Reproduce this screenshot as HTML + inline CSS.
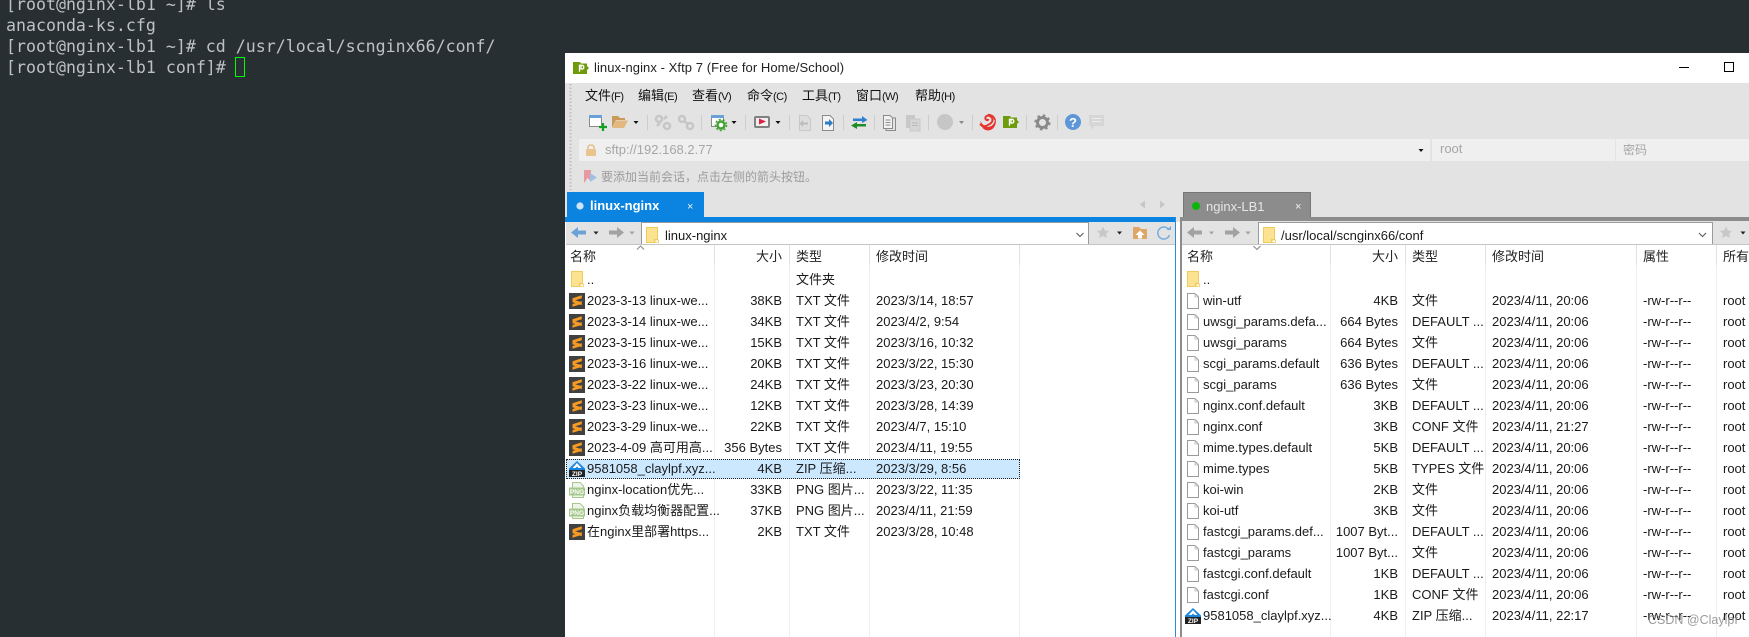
<!DOCTYPE html>
<html><head><meta charset="utf-8"><style>
html,body{margin:0;padding:0;background:#282f33}
#p{position:relative;width:1749px;height:637px;overflow:hidden;background:#282f33;font-family:"Liberation Sans","Noto Sans CJK SC",sans-serif;font-size:13px;color:#1a1a1a}
.a{position:absolute;white-space:nowrap}
.t{position:absolute;left:6px;font-family:"DejaVu Sans Mono",monospace;font-size:16.6px;color:#bcc2c2;line-height:21px;height:21px;white-space:pre}
.r{position:absolute;height:21px;line-height:21px;white-space:nowrap;margin-top:-1px}
.m{top:87px;height:18px;line-height:18px;color:#111}
.m i{font-style:normal;font-size:11px;letter-spacing:-.5px}
.h{top:247px;height:20px;line-height:20px;color:#222}
svg{position:absolute;left:0;top:0}
</style></head><body><div id="p">
<div class="t" style="top:-6px">[root@nginx-lb1 ~]# ls</div>
<div class="t" style="top:15px">anaconda-ks.cfg</div>
<div class="t" style="top:36px">[root@nginx-lb1 ~]# cd /usr/local/scnginx66/conf/</div>
<div class="t" style="top:57px">[root@nginx-lb1 conf]#</div>
<div class="a" style="left:235px;top:57px;width:8px;height:18px;border:1px solid #0f0"></div>

<div class="a" style="left:565px;top:53px;width:1184px;height:584px;background:#fff"></div>
<div class="a" style="left:565px;top:83px;width:1184px;height:139px;background:#e3e3e3"></div>
<div class="a" style="left:579px;top:139px;width:851px;height:22px;background:#efefef"></div>
<div class="a" style="left:1432px;top:139px;width:183px;height:22px;background:#efefef"></div>
<div class="a" style="left:1616px;top:139px;width:133px;height:22px;background:#efefef"></div>
<div class="a" style="left:567px;top:192px;width:137px;height:25px;background:#0a84e0"></div>
<div class="a" style="left:565px;top:217px;width:611px;height:5px;background:#0a84e0"></div>
<div class="a" style="left:1175px;top:217px;width:1px;height:420px;background:#2a8ad8"></div>
<div class="a" style="left:1177px;top:192px;width:572px;height:30px;background:#e3e3e3"></div>
<div class="a" style="left:1182px;top:222px;width:567px;height:22px;background:#e3e3e3"></div>
<div class="a" style="left:1183px;top:192px;width:128px;height:25px;background:#8c8c8c;box-shadow:inset 0 1px 0 #777,inset 1px 0 0 #777,inset -1px 0 0 #777"></div>
<div class="a" style="left:1180px;top:217px;width:569px;height:4px;background:#8c8c8c"></div>
<div class="a" style="left:1180px;top:221px;width:2px;height:416px;background:#8c8c8c"></div>
<div class="a" style="left:566px;top:222px;width:609px;height:22px;background:#e3e3e3"></div>
<div class="a" style="left:1182px;top:244px;width:567px;height:393px;background:#fff"></div>
<div class="a" style="left:641px;top:222px;width:446px;height:21px;background:#fff;border:1px solid #9a9a9a"></div>
<div class="a" style="left:1258px;top:222px;width:453px;height:21px;background:#fff;border:1px solid #9a9a9a"></div>
<div class="a" style="left:566px;top:244px;width:609px;height:1px;background:#c4c4c4"></div>
<div class="a" style="left:1182px;top:244px;width:567px;height:1px;background:#c4c4c4"></div>

<!-- column dividers -->
<div class="a" style="left:714px;top:245px;width:1px;height:392px;background:#e8f1fa"></div>
<div class="a" style="left:789px;top:245px;width:1px;height:392px;background:#e8f1fa"></div>
<div class="a" style="left:869px;top:245px;width:1px;height:392px;background:#e8f1fa"></div>
<div class="a" style="left:1019px;top:245px;width:1px;height:392px;background:#e8f1fa"></div>
<div class="a" style="left:1330px;top:245px;width:1px;height:392px;background:#e8f1fa"></div>
<div class="a" style="left:1405px;top:245px;width:1px;height:392px;background:#e8f1fa"></div>
<div class="a" style="left:1485px;top:245px;width:1px;height:392px;background:#e8f1fa"></div>
<div class="a" style="left:1636px;top:245px;width:1px;height:392px;background:#e8f1fa"></div>
<div class="a" style="left:1716px;top:245px;width:1px;height:392px;background:#e8f1fa"></div>
<div class="a" style="left:566px;top:459px;width:452px;height:18px;background:#cce8ff;border:1px dotted #222"></div>

<div class="a" style="left:594px;top:59px;line-height:17px;color:#222;letter-spacing:.07px">linux-nginx - Xftp 7 (Free for Home/School)</div>

<div class="a m" style="left:585px">文件<i>(F)</i></div>
<div class="a m" style="left:638px">编辑<i>(E)</i></div>
<div class="a m" style="left:692px">查看<i>(V)</i></div>
<div class="a m" style="left:747px">命令<i>(C)</i></div>
<div class="a m" style="left:802px">工具<i>(T)</i></div>
<div class="a m" style="left:856px">窗口<i>(W)</i></div>
<div class="a m" style="left:915px">帮助<i>(H)</i></div>

<div class="a" style="left:605px;top:141px;line-height:18px;color:#a6a6a6">sftp://192.168.2.77</div>
<div class="a" style="left:1440px;top:140px;line-height:18px;color:#a6a6a6">root</div>
<div class="a" style="left:1623px;top:140px;line-height:20px;color:#a6a6a6;font-size:12px">密码</div>
<div class="a" style="left:601px;top:168px;line-height:18px;color:#9c9c9c;font-size:12px">要添加当前会话，点击左侧的箭头按钮。</div>

<div class="a" style="left:590px;top:197px;line-height:18px;color:#fff;font-weight:bold">linux-nginx</div>
<div class="a" style="left:687px;top:198px;line-height:18px;color:#e8f4ff;font-size:11px">×</div>
<div class="a" style="left:1206px;top:198px;line-height:18px;color:#e6e6e6">nginx-LB1</div>
<div class="a" style="left:1295px;top:198px;line-height:18px;color:#f0f0f0;font-size:11px">×</div>

<div class="a" style="left:665px;top:227px;line-height:18px">linux-nginx</div>
<div class="a" style="left:1281px;top:227px;line-height:18px">/usr/local/scnginx66/conf</div>

<div class="a h" style="left:570px">名称</div>
<div class="a h" style="left:700px;width:82px;text-align:right">大小</div>
<div class="a h" style="left:796px">类型</div>
<div class="a h" style="left:876px">修改时间</div>
<div class="a h" style="left:1187px">名称</div>
<div class="a h" style="left:1316px;width:82px;text-align:right">大小</div>
<div class="a h" style="left:1412px">类型</div>
<div class="a h" style="left:1492px">修改时间</div>
<div class="a h" style="left:1643px">属性</div>
<div class="a h" style="left:1723px">所有者</div>

<!-- left rows -->
<div class="r" style="top:270px;left:587px">..</div><div class="r" style="top:270px;left:796px">文件夹</div>
<div class="r" style="top:291px;left:587px">2023-3-13 linux-we...</div><div class="r" style="top:291px;left:700px;width:82px;text-align:right">38KB</div><div class="r" style="top:291px;left:796px">TXT 文件</div><div class="r" style="top:291px;left:876px">2023/3/14, 18:57</div>
<div class="r" style="top:312px;left:587px">2023-3-14 linux-we...</div><div class="r" style="top:312px;left:700px;width:82px;text-align:right">34KB</div><div class="r" style="top:312px;left:796px">TXT 文件</div><div class="r" style="top:312px;left:876px">2023/4/2, 9:54</div>
<div class="r" style="top:333px;left:587px">2023-3-15 linux-we...</div><div class="r" style="top:333px;left:700px;width:82px;text-align:right">15KB</div><div class="r" style="top:333px;left:796px">TXT 文件</div><div class="r" style="top:333px;left:876px">2023/3/16, 10:32</div>
<div class="r" style="top:354px;left:587px">2023-3-16 linux-we...</div><div class="r" style="top:354px;left:700px;width:82px;text-align:right">20KB</div><div class="r" style="top:354px;left:796px">TXT 文件</div><div class="r" style="top:354px;left:876px">2023/3/22, 15:30</div>
<div class="r" style="top:375px;left:587px">2023-3-22 linux-we...</div><div class="r" style="top:375px;left:700px;width:82px;text-align:right">24KB</div><div class="r" style="top:375px;left:796px">TXT 文件</div><div class="r" style="top:375px;left:876px">2023/3/23, 20:30</div>
<div class="r" style="top:396px;left:587px">2023-3-23 linux-we...</div><div class="r" style="top:396px;left:700px;width:82px;text-align:right">12KB</div><div class="r" style="top:396px;left:796px">TXT 文件</div><div class="r" style="top:396px;left:876px">2023/3/28, 14:39</div>
<div class="r" style="top:417px;left:587px">2023-3-29 linux-we...</div><div class="r" style="top:417px;left:700px;width:82px;text-align:right">22KB</div><div class="r" style="top:417px;left:796px">TXT 文件</div><div class="r" style="top:417px;left:876px">2023/4/7, 15:10</div>
<div class="r" style="top:438px;left:587px">2023-4-09 高可用高...</div><div class="r" style="top:438px;left:700px;width:82px;text-align:right">356 Bytes</div><div class="r" style="top:438px;left:796px">TXT 文件</div><div class="r" style="top:438px;left:876px">2023/4/11, 19:55</div>
<div class="r" style="top:459px;left:587px">9581058_claylpf.xyz...</div><div class="r" style="top:459px;left:700px;width:82px;text-align:right">4KB</div><div class="r" style="top:459px;left:796px">ZIP 压缩...</div><div class="r" style="top:459px;left:876px">2023/3/29, 8:56</div>
<div class="r" style="top:480px;left:587px">nginx-location优先...</div><div class="r" style="top:480px;left:700px;width:82px;text-align:right">33KB</div><div class="r" style="top:480px;left:796px">PNG 图片...</div><div class="r" style="top:480px;left:876px">2023/3/22, 11:35</div>
<div class="r" style="top:501px;left:587px">nginx负载均衡器配置...</div><div class="r" style="top:501px;left:700px;width:82px;text-align:right">37KB</div><div class="r" style="top:501px;left:796px">PNG 图片...</div><div class="r" style="top:501px;left:876px">2023/4/11, 21:59</div>
<div class="r" style="top:522px;left:587px">在nginx里部署https...</div><div class="r" style="top:522px;left:700px;width:82px;text-align:right">2KB</div><div class="r" style="top:522px;left:796px">TXT 文件</div><div class="r" style="top:522px;left:876px">2023/3/28, 10:48</div>

<!-- right rows -->
<div class="r" style="top:270px;left:1203px">..</div>
<div class="r" style="top:291px;left:1203px">win-utf</div><div class="r" style="top:291px;left:1316px;width:82px;text-align:right">4KB</div><div class="r" style="top:291px;left:1412px">文件</div><div class="r" style="top:291px;left:1492px">2023/4/11, 20:06</div><div class="r" style="top:291px;left:1643px">-rw-r--r--</div><div class="r" style="top:291px;left:1723px">root</div>
<div class="r" style="top:312px;left:1203px">uwsgi_params.defa...</div><div class="r" style="top:312px;left:1316px;width:82px;text-align:right">664 Bytes</div><div class="r" style="top:312px;left:1412px">DEFAULT ...</div><div class="r" style="top:312px;left:1492px">2023/4/11, 20:06</div><div class="r" style="top:312px;left:1643px">-rw-r--r--</div><div class="r" style="top:312px;left:1723px">root</div>
<div class="r" style="top:333px;left:1203px">uwsgi_params</div><div class="r" style="top:333px;left:1316px;width:82px;text-align:right">664 Bytes</div><div class="r" style="top:333px;left:1412px">文件</div><div class="r" style="top:333px;left:1492px">2023/4/11, 20:06</div><div class="r" style="top:333px;left:1643px">-rw-r--r--</div><div class="r" style="top:333px;left:1723px">root</div>
<div class="r" style="top:354px;left:1203px">scgi_params.default</div><div class="r" style="top:354px;left:1316px;width:82px;text-align:right">636 Bytes</div><div class="r" style="top:354px;left:1412px">DEFAULT ...</div><div class="r" style="top:354px;left:1492px">2023/4/11, 20:06</div><div class="r" style="top:354px;left:1643px">-rw-r--r--</div><div class="r" style="top:354px;left:1723px">root</div>
<div class="r" style="top:375px;left:1203px">scgi_params</div><div class="r" style="top:375px;left:1316px;width:82px;text-align:right">636 Bytes</div><div class="r" style="top:375px;left:1412px">文件</div><div class="r" style="top:375px;left:1492px">2023/4/11, 20:06</div><div class="r" style="top:375px;left:1643px">-rw-r--r--</div><div class="r" style="top:375px;left:1723px">root</div>
<div class="r" style="top:396px;left:1203px">nginx.conf.default</div><div class="r" style="top:396px;left:1316px;width:82px;text-align:right">3KB</div><div class="r" style="top:396px;left:1412px">DEFAULT ...</div><div class="r" style="top:396px;left:1492px">2023/4/11, 20:06</div><div class="r" style="top:396px;left:1643px">-rw-r--r--</div><div class="r" style="top:396px;left:1723px">root</div>
<div class="r" style="top:417px;left:1203px">nginx.conf</div><div class="r" style="top:417px;left:1316px;width:82px;text-align:right">3KB</div><div class="r" style="top:417px;left:1412px">CONF 文件</div><div class="r" style="top:417px;left:1492px">2023/4/11, 21:27</div><div class="r" style="top:417px;left:1643px">-rw-r--r--</div><div class="r" style="top:417px;left:1723px">root</div>
<div class="r" style="top:438px;left:1203px">mime.types.default</div><div class="r" style="top:438px;left:1316px;width:82px;text-align:right">5KB</div><div class="r" style="top:438px;left:1412px">DEFAULT ...</div><div class="r" style="top:438px;left:1492px">2023/4/11, 20:06</div><div class="r" style="top:438px;left:1643px">-rw-r--r--</div><div class="r" style="top:438px;left:1723px">root</div>
<div class="r" style="top:459px;left:1203px">mime.types</div><div class="r" style="top:459px;left:1316px;width:82px;text-align:right">5KB</div><div class="r" style="top:459px;left:1412px">TYPES 文件</div><div class="r" style="top:459px;left:1492px">2023/4/11, 20:06</div><div class="r" style="top:459px;left:1643px">-rw-r--r--</div><div class="r" style="top:459px;left:1723px">root</div>
<div class="r" style="top:480px;left:1203px">koi-win</div><div class="r" style="top:480px;left:1316px;width:82px;text-align:right">2KB</div><div class="r" style="top:480px;left:1412px">文件</div><div class="r" style="top:480px;left:1492px">2023/4/11, 20:06</div><div class="r" style="top:480px;left:1643px">-rw-r--r--</div><div class="r" style="top:480px;left:1723px">root</div>
<div class="r" style="top:501px;left:1203px">koi-utf</div><div class="r" style="top:501px;left:1316px;width:82px;text-align:right">3KB</div><div class="r" style="top:501px;left:1412px">文件</div><div class="r" style="top:501px;left:1492px">2023/4/11, 20:06</div><div class="r" style="top:501px;left:1643px">-rw-r--r--</div><div class="r" style="top:501px;left:1723px">root</div>
<div class="r" style="top:522px;left:1203px">fastcgi_params.def...</div><div class="r" style="top:522px;left:1316px;width:82px;text-align:right">1007 Byt...</div><div class="r" style="top:522px;left:1412px">DEFAULT ...</div><div class="r" style="top:522px;left:1492px">2023/4/11, 20:06</div><div class="r" style="top:522px;left:1643px">-rw-r--r--</div><div class="r" style="top:522px;left:1723px">root</div>
<div class="r" style="top:543px;left:1203px">fastcgi_params</div><div class="r" style="top:543px;left:1316px;width:82px;text-align:right">1007 Byt...</div><div class="r" style="top:543px;left:1412px">文件</div><div class="r" style="top:543px;left:1492px">2023/4/11, 20:06</div><div class="r" style="top:543px;left:1643px">-rw-r--r--</div><div class="r" style="top:543px;left:1723px">root</div>
<div class="r" style="top:564px;left:1203px">fastcgi.conf.default</div><div class="r" style="top:564px;left:1316px;width:82px;text-align:right">1KB</div><div class="r" style="top:564px;left:1412px">DEFAULT ...</div><div class="r" style="top:564px;left:1492px">2023/4/11, 20:06</div><div class="r" style="top:564px;left:1643px">-rw-r--r--</div><div class="r" style="top:564px;left:1723px">root</div>
<div class="r" style="top:585px;left:1203px">fastcgi.conf</div><div class="r" style="top:585px;left:1316px;width:82px;text-align:right">1KB</div><div class="r" style="top:585px;left:1412px">CONF 文件</div><div class="r" style="top:585px;left:1492px">2023/4/11, 20:06</div><div class="r" style="top:585px;left:1643px">-rw-r--r--</div><div class="r" style="top:585px;left:1723px">root</div>
<div class="r" style="top:606px;left:1203px">9581058_claylpf.xyz...</div><div class="r" style="top:606px;left:1316px;width:82px;text-align:right">4KB</div><div class="r" style="top:606px;left:1412px">ZIP 压缩...</div><div class="r" style="top:606px;left:1492px">2023/4/11, 22:17</div><div class="r" style="top:606px;left:1643px">-rw-r--r--</div><div class="r" style="top:606px;left:1723px">root</div>

<svg width="1749" height="637" viewBox="0 0 1749 637" font-family="Liberation Sans,sans-serif">
<defs>
<symbol id="sub" viewBox="0 0 16 16" width="16" height="16"><rect width="16" height="16" fill="#404040"/><path d="M3.5 5.2L12.8 2.3V5.2L3.5 8.1ZM3.5 6.4L12.8 9.2V12.1L3.5 9.3ZM3.5 11L12.8 8.1V10.9L3.5 13.8Z" fill="#f59a23"/></symbol>
<symbol id="fol" viewBox="0 0 13 16" width="13" height="16"><path d="M.5.5H11.5V12.5H8.5V15.5H.5Z" fill="#fce391" stroke="#f0ca5c"/><path d="M9 15.5V13H12.5V15.5Z" fill="#fff" stroke="#f0ca5c" stroke-width=".8"/></symbol>
<symbol id="file" viewBox="0 0 12 16" width="12" height="16"><path d="M.5.5H8L11.5 4V15.5H.5Z" fill="#fff" stroke="#9a9a9a"/><path d="M8 .5V4H11.5" fill="none" stroke="#c4c4c4"/></symbol>
<symbol id="zip" viewBox="0 0 16 16" width="16" height="16"><path d="M8 0L16 7.5V9H0V7.5Z" fill="#1a86e0"/><path d="M8 2L12.5 7H9.5L8 5.5L6.5 7H3.5Z" fill="#fff"/><rect y="9" width="16" height="7" fill="#222"/><text x="8" y="15.2" font-size="6.6" font-weight="bold" fill="#fff" text-anchor="middle">ZIP</text></symbol>
<symbol id="png" viewBox="0 0 16 16" width="16" height="16"><path d="M3.5.5H11L14.5 4V15.5H3.5Z" fill="#eef5e8" stroke="#a6c88c"/><rect x="0" y="5.5" width="16" height="8" fill="#a6c88c"/><text x="8" y="12.2" font-size="6.6" font-weight="bold" fill="#fff" text-anchor="middle">PNG</text></symbol>
<symbol id="gf" viewBox="0 0 16 12" width="16" height="12"><path d="M0 0H7L8 1.5H14V4L16 6L14 8V12H0Z" fill="#6e9b0c"/><path d="M6.5 9.8V3.3H8.6Q10.8 3.3 10.8 5.2T8.6 7.1M8 3V7.8" fill="none" stroke="#fff" stroke-width="1.3"/></symbol>
</defs>

<!-- title icon and buttons -->
<use href="#gf" x="573" y="62"/>
<path d="M1679 67.5H1689" stroke="#000" stroke-width="1"/>
<rect x="1724.5" y="62.5" width="9" height="9" fill="none" stroke="#000"/>

<!-- gripper -->
<path d="M570.5 84V190" stroke="#c0c0c0" stroke-width="2" stroke-dasharray="1.5 2"/>

<!-- toolbar separators -->
<g stroke="#cdcdcd"><path d="M647.5 115V130M701.5 115V130M745.5 115V130M789.5 115V130M843.5 115V130M874.5 115V130M928.5 115V130M972.5 115V130M1026.5 115V130M1057.5 115V130"/></g>
<!-- carets -->
<g fill="#111"><path d="M633.5 121H638.5L636 124ZM731.5 121H736.5L734 124ZM775.5 121H780.5L778 124Z"/><path d="M959 121H964L961.5 124Z" fill="#888"/></g>

<!-- new session -->
<rect x="589.5" y="115.5" width="12" height="11" fill="#fff" stroke="#8a8a8a"/><rect x="589" y="115" width="13" height="3" fill="#6a9fd8"/><path d="M603 123V131M599 127H607" stroke="#14a020" stroke-width="2.2"/>
<!-- open folder -->
<path d="M612 116H618L620 118H625V120H616L612 128Z" fill="#c99a5a"/><path d="M612.5 128L616 120.5H628L624 128Z" fill="#e3b87e"/>
<!-- link icons -->
<g fill="none" stroke="#c6c6c6" stroke-width="2.5"><circle cx="659" cy="119" r="3"/><circle cx="667" cy="126" r="3"/><path d="M657 126L660 123M664 119L667 116"/><circle cx="682" cy="119" r="3"/><circle cx="690" cy="126" r="3"/><path d="M684 121L688 124"/></g>
<!-- settings -->
<rect x="711.5" y="115.5" width="12" height="11" fill="#fff" stroke="#8a8a8a"/><rect x="711" y="115" width="13" height="3" fill="#6a9fd8"/><circle cx="721" cy="125" r="3.5" fill="#fff" stroke="#40a030" stroke-width="2.4"/><circle cx="721" cy="125" r="5.6" fill="none" stroke="#40a030" stroke-width="1.4" stroke-dasharray="2 2"/>
<!-- video -->
<rect x="755" y="117" width="14" height="10" rx="1" fill="#f0f0f0" stroke="#808080" stroke-width="2"/><path d="M759 118.5L766 121.5L759 124.5Z" fill="#e02040"/>
<!-- doc arrows -->
<path d="M799.5 115.5H807L810.5 119V130.5H799.5Z" fill="#ddd" stroke="#c8c8c8"/><path d="M808 122.5H803V120L799.5 123.5L803 127V124.5H808Z" fill="#bcbcbc"/>
<path d="M822.5 115.5H830L833.5 119V130.5H822.5Z" fill="#f4f4f4" stroke="#8a8a8a"/><path d="M825 121.5H829V119L833 123L829 127V124.5H825Z" fill="#2a7cc8"/>
<!-- swap -->
<path d="M853 118.5H862V116L867.5 120L862 123V121H853Z" fill="#2f7fd0"/><path d="M866 124H857V122L851 125.5L857 129V126.5H866Z" fill="#1f8c28"/>
<!-- doc copy / paste -->
<path d="M883.5 115.5H890L892.5 118V128.5H883.5Z" fill="#f2f2f2" stroke="#8a8a8a"/><path d="M893 118H895.5V130.5H886V129" fill="none" stroke="#8a8a8a"/><path d="M885.5 120H890.5M885.5 122.5H890.5M885.5 125H890.5" stroke="#8a8a8a"/>
<rect x="906" y="115" width="9" height="13" fill="#c8c8c8"/><rect x="910" y="119" width="10" height="12" fill="#d6d6d6" stroke="#c8c8c8"/><path d="M912 123H918M912 125.5H918" stroke="#bbb"/>
<!-- circle -->
<circle cx="945" cy="122" r="8" fill="#c6c6c6"/>
<!-- red swirl -->
<path d="M980 124Q984 128 988 125Q994 122 992 118Q990 114.5 986.5 116Q984 118 986.5 120Q988 120.5 988.5 119" fill="none" stroke="#e8322d" stroke-width="2"/><path d="M980.5 121Q981 130 988 130.5Q994 130 995.5 124Q996.5 120 995 118Q995 126 988 127Q983 126.5 980.5 121Z" fill="#e8322d"/><path d="M988 114.5Q994 115 995 120" fill="none" stroke="#e8322d" stroke-width="1.6"/>
<use href="#gf" x="1003" y="116"/>
<!-- gear -->
<circle cx="1042.5" cy="122.5" r="5" fill="none" stroke="#8a8a8a" stroke-width="3"/><circle cx="1042.5" cy="122.5" r="7" fill="none" stroke="#8a8a8a" stroke-width="2.2" stroke-dasharray="2.5 3"/>
<!-- help -->
<circle cx="1073" cy="122" r="8" fill="#5d97d8"/><text x="1073" y="127" font-size="13" font-weight="bold" fill="#fff" text-anchor="middle">?</text>
<!-- chat -->
<path d="M1089 115H1104V126H1094.5L1091 130V126H1089Z" fill="#d6d6d6"/><path d="M1092 118.5H1101M1092 121.5H1101" stroke="#eee"/>

<!-- lock -->
<path d="M588 149V147.5Q588 145 591 145T594 147.5V149" fill="none" stroke="#e4c088" stroke-width="1.5"/><rect x="586" y="149" width="10" height="7" rx="1" fill="#e8c48e"/>
<path d="M1418.5 149H1423.5L1421 152Z" fill="#111"/>
<!-- hint icon -->
<path d="M584 170H591V181L587.5 178L584 183Z" fill="#e69aa0"/><path d="M590 173L597 177.5L590 182Z" fill="#9fc0e4"/>

<!-- tabs -->
<circle cx="580" cy="206" r="3.6" fill="#cfe4f6"/>
<circle cx="1196" cy="206" r="4" fill="#0cb40c"/>
<path d="M1145 200.5V208.5L1140 204.5Z" fill="#c6c6c6"/><path d="M1160 200.5V208.5L1165 204.5Z" fill="#c6c6c6"/>

<!-- nav left -->
<path d="M586 230.5H578V227L571 232.5L578 238V234.5H586Z" fill="#6ba3d8"/><path d="M593.5 231.5H598.5L596 234.5Z" fill="#222"/>
<path d="M609 230.5H617V227L624 232.5L617 238V234.5H609Z" fill="#a2a2a2"/><path d="M629.5 231.5H634.5L632 234.5Z" fill="#a0a0a0"/>
<path d="M1076.5 233L1080 236.5L1083.5 233" fill="none" stroke="#555"/>
<path d="M1103 226.5L1105 230.5L1109 231L1106 234L1107 238L1103 236L1099 238L1100 234L1097 231L1101 230.5Z" fill="#c8c8c8"/><path d="M1117 231.5H1122L1119.5 234.5Z" fill="#222"/>
<path d="M1133 227H1139L1141 229H1147V239H1133Z" fill="#dea668"/><path d="M1140 230.5L1144.5 235H1142V238.5H1138V235H1135.5Z" fill="#fff"/>
<path d="M1169 230A6 6 0 1 0 1169.5 235" fill="none" stroke="#76aedd" stroke-width="1.5"/><path d="M1166.5 230H1171V226Z" fill="#76aedd"/>
<!-- nav right -->
<path d="M1202 230.5H1194V227L1187 232.5L1194 238V234.5H1202Z" fill="#a2a2a2"/><path d="M1209 231.5H1214L1211.5 234.5Z" fill="#a0a0a0"/>
<path d="M1225 230.5H1233V227L1240 232.5L1233 238V234.5H1225Z" fill="#a2a2a2"/><path d="M1245.5 231.5H1250.5L1248 234.5Z" fill="#a0a0a0"/>
<path d="M1699 233L1702.5 236.5L1706 233" fill="none" stroke="#555"/>
<path d="M1726 226.5L1728 230.5L1732 231L1729 234L1730 238L1726 236L1722 238L1723 234L1720 231L1724 230.5Z" fill="#c8c8c8"/><path d="M1740.5 231.5H1745.5L1743 234.5Z" fill="#222"/>
<use href="#fol" x="646" y="227"/>
<use href="#fol" x="1263" y="227"/>
<!-- sort carets -->
<path d="M637 249.5L640.5 246L644 249.5" fill="none" stroke="#888"/>
<path d="M1253.5 246L1257 249.5L1260.5 246" fill="none" stroke="#888"/>
<!-- header dividers -->
<path d="M714.5 245V265M789.5 245V265M869.5 245V265M1019.5 245V265M1330.5 245V265M1405.5 245V265M1485.5 245V265M1636.5 245V265M1716.5 245V265" stroke="#e2e2e2"/>

<!-- left file icons -->
<use href="#fol" x="571" y="271"/>
<use href="#sub" x="569" y="293"/><use href="#sub" x="569" y="314"/><use href="#sub" x="569" y="335"/><use href="#sub" x="569" y="356"/><use href="#sub" x="569" y="377"/><use href="#sub" x="569" y="398"/><use href="#sub" x="569" y="419"/><use href="#sub" x="569" y="440"/>
<use href="#zip" x="569" y="461"/>
<use href="#png" x="569" y="482"/><use href="#png" x="569" y="503"/>
<use href="#sub" x="569" y="524"/>
<!-- right file icons -->
<use href="#fol" x="1187" y="271"/>
<use href="#file" x="1187" y="293"/><use href="#file" x="1187" y="314"/><use href="#file" x="1187" y="335"/><use href="#file" x="1187" y="356"/><use href="#file" x="1187" y="377"/><use href="#file" x="1187" y="398"/><use href="#file" x="1187" y="419"/><use href="#file" x="1187" y="440"/><use href="#file" x="1187" y="461"/><use href="#file" x="1187" y="482"/><use href="#file" x="1187" y="503"/><use href="#file" x="1187" y="524"/><use href="#file" x="1187" y="545"/><use href="#file" x="1187" y="566"/><use href="#file" x="1187" y="587"/>
<use href="#zip" x="1185" y="608"/>
</svg>
<div class="a" style="left:1648px;top:611px;line-height:18px;font-size:12.5px;color:rgba(130,130,130,.8)">CSDN @Claylpf</div>
</div></body></html>
